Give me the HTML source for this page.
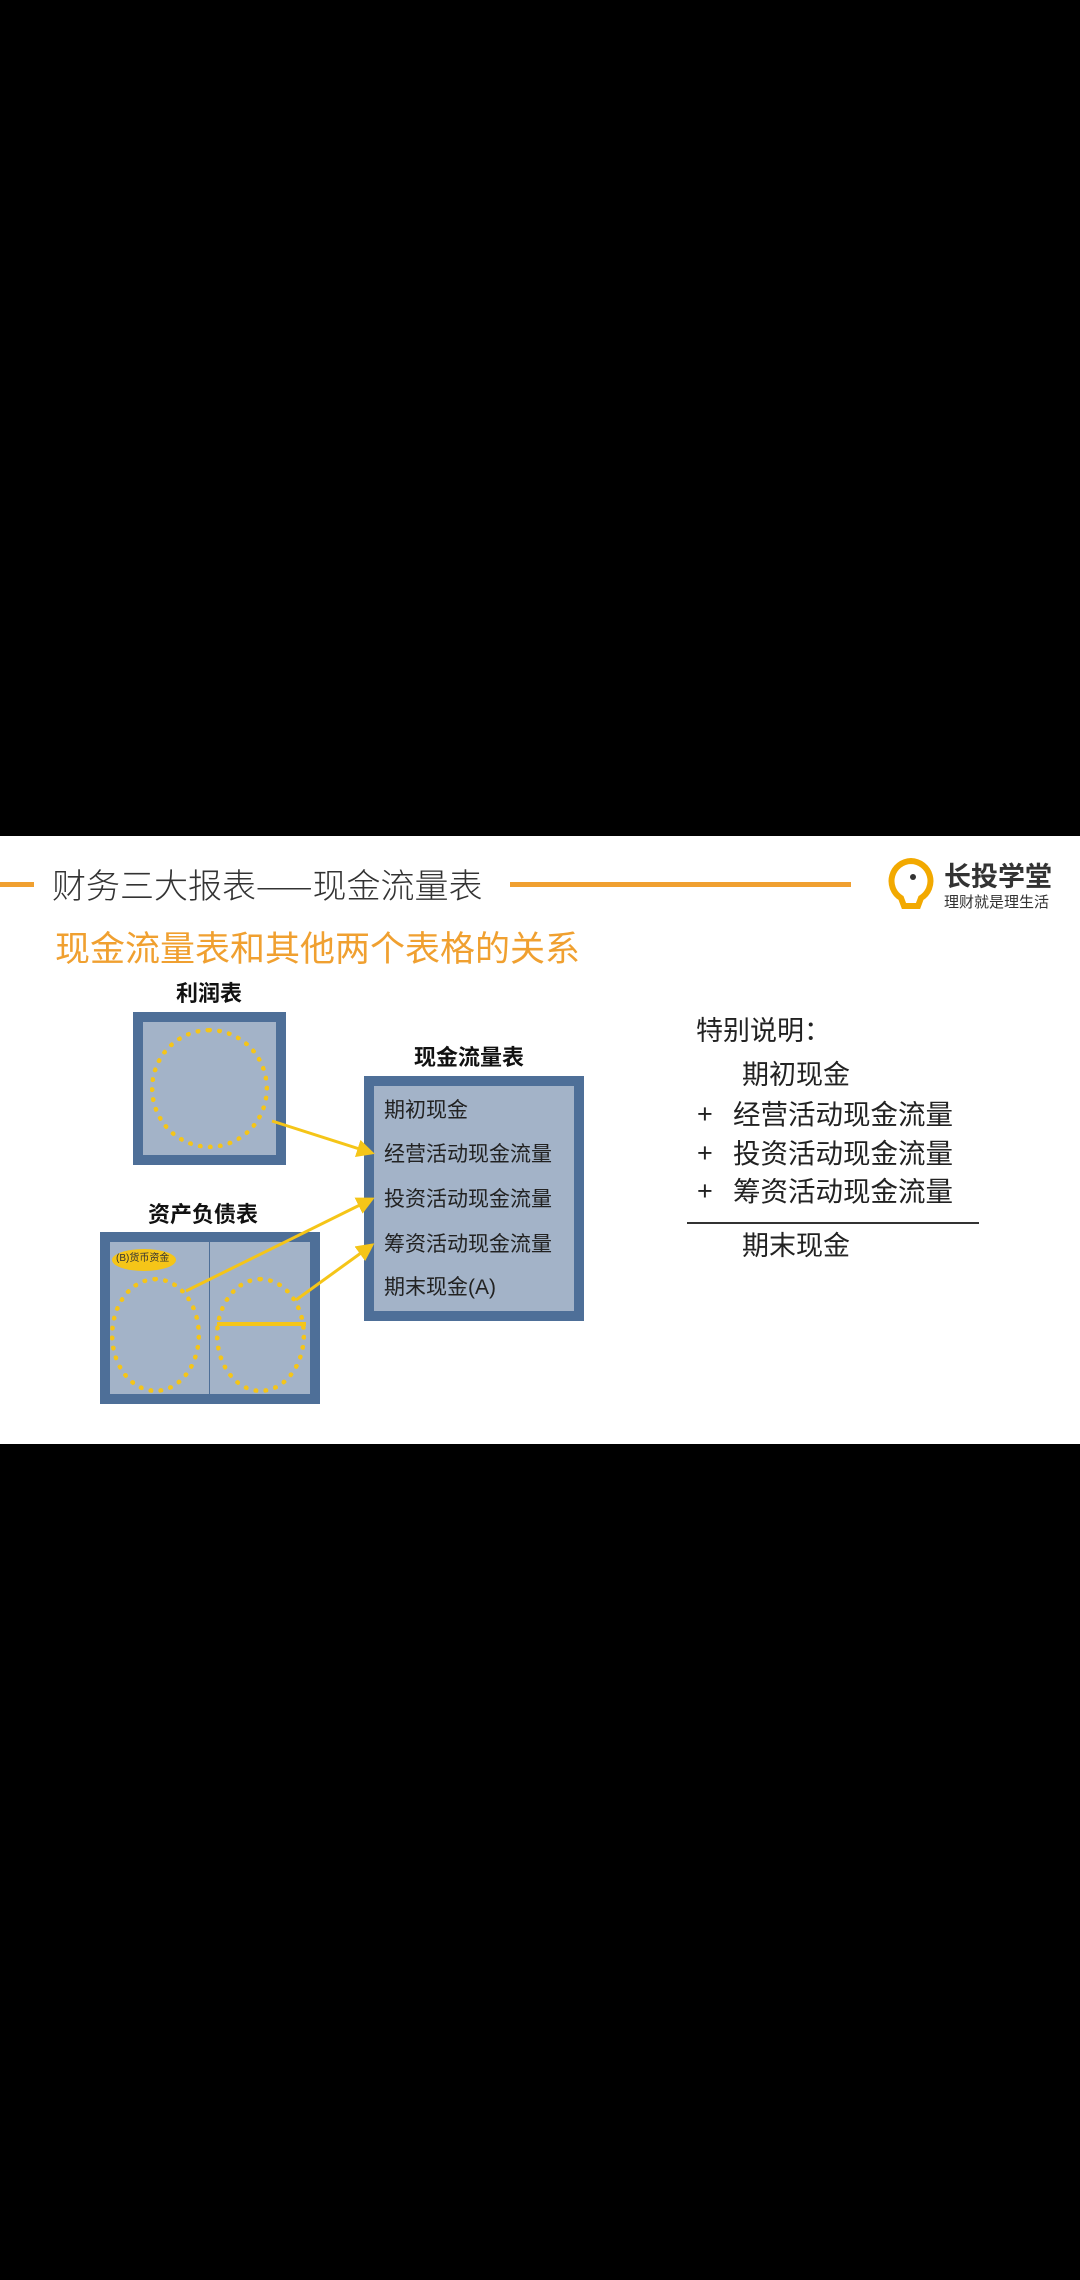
<!DOCTYPE html>
<html><head><meta charset="utf-8"><style>
body{margin:0;width:1080px;height:2280px;background:#000;position:relative;font-family:"Liberation Sans","Noto Sans CJK SC",sans-serif;overflow:hidden}
.w{position:absolute;left:0;top:836px;width:1080px;height:608px;background:#fff}
.t{position:absolute;white-space:nowrap;line-height:1}
.box{position:absolute;background:#a3b3c8;border:10px solid #4e6f98;box-sizing:border-box}
.c{position:absolute;border:5px dotted #f5c518;border-radius:50%;box-sizing:border-box}
</style></head><body>
<div class="w"></div>
<div style="position:absolute;left:0;top:882px;width:34px;height:5px;background:#f0a030"></div>
<div class="t" style="left:52px;top:867px;font-size:34px;color:#333;font-weight:300">财务三大报表<span style="font-family:'Noto Sans CJK SC',sans-serif">——</span>现金流量表</div>
<div style="position:absolute;left:510px;top:882px;width:341px;height:5px;background:#f0a030"></div>
<svg style="position:absolute;left:886px;top:857px" width="50" height="56" viewBox="0 0 50 56"><path d="M25 4a20 20 0 0 1 10 37l-3 8h-14l-3-8a20 20 0 0 1 10-37z" fill="none" stroke="#f2a900" stroke-width="6"/><circle cx="27" cy="20" r="3" fill="#333"/></svg>
<div class="t" style="left:944px;top:864px;font-size:27px;font-weight:bold;color:#333">长投学堂</div>
<div class="t" style="left:944px;top:895px;font-size:15px;color:#333">理财就是理生活</div>
<div class="t" style="left:55px;top:932px;font-size:35px;color:#f0a030">现金流量表和其他两个表格的关系</div>
<div class="t" style="left:176px;top:983px;font-size:22px;font-weight:bold;color:#111">利润表</div>
<div class="box" style="left:133px;top:1012px;width:153px;height:153px"></div>
<div class="c" style="left:150px;top:1028px;width:119px;height:121px"></div>
<div class="t" style="left:414px;top:1047px;font-size:22px;font-weight:bold;color:#111">现金流量表</div>
<div class="box" style="left:364px;top:1076px;width:220px;height:245px"></div>
<div class="t" style="left:384px;top:1099px;font-size:21px;color:#222;line-height:1.1">期初现金</div>
<div class="t" style="left:384px;top:1143px;font-size:21px;color:#222;line-height:1.1">经营活动现金流量</div>
<div class="t" style="left:384px;top:1188px;font-size:21px;color:#222;line-height:1.1">投资活动现金流量</div>
<div class="t" style="left:384px;top:1233px;font-size:21px;color:#222;line-height:1.1">筹资活动现金流量</div>
<div class="t" style="left:384px;top:1276px;font-size:21px;color:#222;line-height:1.1">期末现金(A)</div>
<div class="t" style="left:148px;top:1204px;font-size:22px;font-weight:bold;color:#111">资产负债表</div>
<div class="box" style="left:100px;top:1232px;width:220px;height:172px"></div>
<div style="position:absolute;left:209px;top:1242px;width:1px;height:152px;background:#4e6f98"></div>
<div style="position:absolute;left:112px;top:1249px;width:64px;height:22px;border-radius:50%;background:#f5c518"></div>
<div class="t" style="left:116px;top:1254px;font-size:10px;color:#333">(B)货币资金</div>
<div class="c" style="left:110px;top:1277px;width:91px;height:116px"></div>
<div class="c" style="left:215px;top:1277px;width:91px;height:116px"></div>
<div style="position:absolute;left:217px;top:1322px;width:89px;height:4px;background:#f5c518"></div>
<svg style="position:absolute;left:0;top:0" width="1080" height="1450">
<defs><marker id="a" markerWidth="6" markerHeight="6" refX="5" refY="3" orient="auto" markerUnits="strokeWidth"><path d="M0 0L6 3L0 6z" fill="#f5c518"/></marker></defs>
<g stroke="#f5c518" stroke-width="3" fill="none" marker-end="url(#a)">
<line x1="272" y1="1121" x2="372" y2="1153"/>
<line x1="186" y1="1291" x2="372" y2="1199"/>
<line x1="296" y1="1300" x2="372" y2="1245"/>
</g></svg>
<div class="t" style="left:696px;top:1018px;font-size:27px;color:#222">特别说明：</div>
<div class="t" style="left:742px;top:1062px;font-size:27px;color:#222">期初现金</div>
<div class="t" style="left:697px;top:1101px;font-size:27px;color:#222">+</div>
<div class="t" style="left:733px;top:1101px;font-size:27.5px;color:#222">经营活动现金流量</div>
<div class="t" style="left:697px;top:1140px;font-size:27px;color:#222">+</div>
<div class="t" style="left:733px;top:1140px;font-size:27.5px;color:#222">投资活动现金流量</div>
<div class="t" style="left:697px;top:1178px;font-size:27px;color:#222">+</div>
<div class="t" style="left:733px;top:1178px;font-size:27.5px;color:#222">筹资活动现金流量</div>
<div style="position:absolute;left:687px;top:1222px;width:292px;height:2px;background:#333"></div>
<div class="t" style="left:742px;top:1233px;font-size:27px;color:#222">期末现金</div>
</body></html>
